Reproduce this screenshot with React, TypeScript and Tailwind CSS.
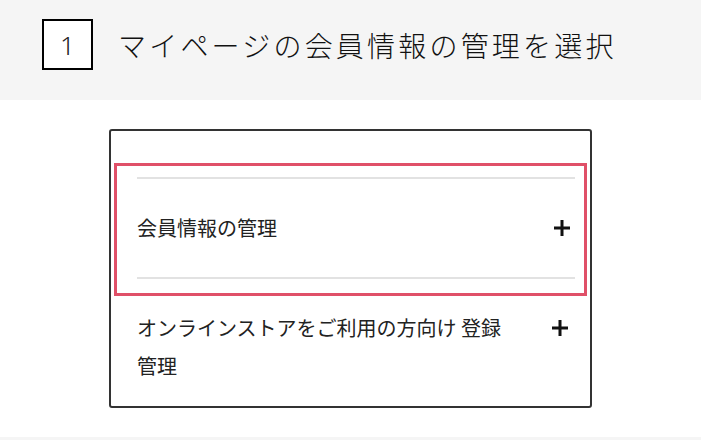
import React from 'react';

const jp = { fontFamily: '"Noto Sans CJK JP", "Noto Sans", sans-serif' };

const PlusIcon: React.FC = () => (
  <svg width="16" height="16" viewBox="0 0 16 16" className="shrink-0">
    <rect x="6.5" y="0" width="3" height="16" fill="#111" />
    <rect x="0" y="6.5" width="16" height="3" fill="#111" />
  </svg>
);

const App: React.FC = () => {
  return (
    <div className="bg-white text-[#222]" style={jp}>
      {/* Step header */}
      <div className="bg-[#f5f5f5] pl-[42px] pt-[19px] pb-[30px]">
        <div className="flex items-center gap-[25px]">
          <div className="w-[51px] h-[51px] border-2 border-black bg-white flex items-center justify-center text-[26px] font-light leading-none font-['Noto_Sans',sans-serif]">
            1
          </div>
          <h1 className="text-[28px] font-light tracking-[3.2px] leading-none text-[#111]">
            マイページの会員情報の管理を選択
          </h1>
        </div>
      </div>

      {/* Menu card */}
      <div className="py-[29px]">
        <div className="mx-auto w-[483px] border-2 border-[#333] rounded-[3px] pt-[32px] px-[3px]">
          <div className="border-[3px] border-[#e05068] pt-[11px] pb-[14px] pl-[20px] pr-[9px]">
            <div className="border-t-2 border-b-2 border-[#e2e2e2] h-[102px] flex items-center justify-between pr-[5px]">
              <span className="text-[20px] leading-none">会員情報の管理</span>
              <PlusIcon />
            </div>
          </div>
          <div className="flex items-start justify-between pl-[23px] pr-[19px] pt-[13px] pb-[21px]">
            <p className="text-[20px] leading-[38px] w-[380px]">
              オンラインストアをご利用の方向け 登録管理
            </p>
            <div className="h-[38px] flex items-center">
              <PlusIcon />
            </div>
          </div>
        </div>
      </div>

      <div className="bg-[#f5f5f5] h-[3px]" />
    </div>
  );
};

export default App;
